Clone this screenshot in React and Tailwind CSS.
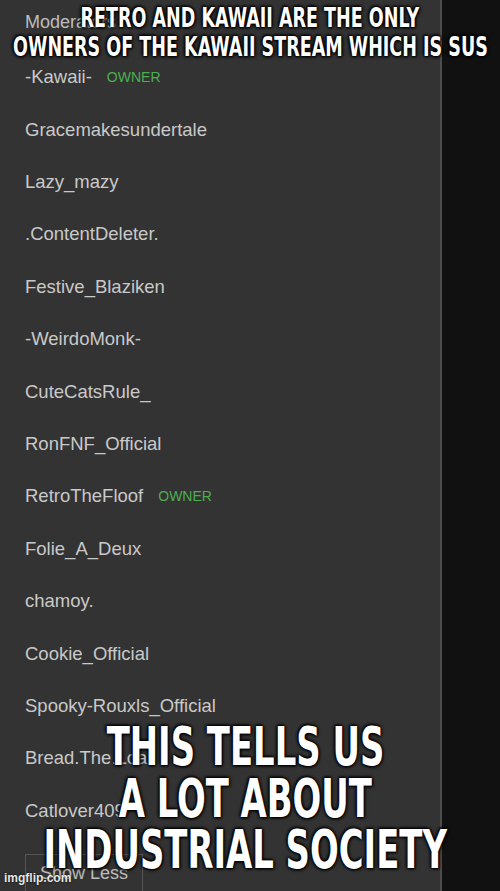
import React from "react";

const members = [
  { name: "-Kawaii-", owner: true },
  { name: "Gracemakesundertale" },
  { name: "Lazy_mazy" },
  { name: ".ContentDeleter." },
  { name: "Festive_Blaziken" },
  { name: "-WeirdoMonk-" },
  { name: "CuteCatsRule_" },
  { name: "RonFNF_Official" },
  { name: "RetroTheFloof", owner: true },
  { name: "Folie_A_Deux" },
  { name: "chamoy." },
  { name: "Cookie_Official" },
  { name: "Spooky-Rouxls_Official" },
  { name: "Bread.The.Loaf" },
  { name: "Catlover409" },
];

const memeFont =
  "font-['DejaVu_Sans_Condensed','Liberation_Sans',sans-serif] font-bold uppercase whitespace-nowrap text-white origin-center [text-shadow:0_0_3px_#000,0_0_3px_#000,1px_1px_4px_#000,-1px_-1px_4px_#000]";

const App = () => {
  return (
    <div className="relative w-[500px] h-[891px] overflow-hidden bg-[#111111] flex">
      {/* moderators panel */}
      <div className="w-[442px] h-full bg-[#333333] border-r-2 border-[#4d4d4d] pt-[10px] pl-[25px] font-['Liberation_Sans',Arial,sans-serif]">
        <div className="h-[24px] leading-[24px] text-[18px] text-[#bdbdbd]">Moderators</div>
        <div className="mt-[17px] flex flex-col">
          {members.map((m) => (
            <div key={m.name} className="h-[52.4px] flex items-center gap-[15px]">
              <span className="text-[18.5px] text-[#c9c9c9]">{m.name}</span>
              {m.owner && (
                <span className="text-[14px] text-[#4caf50]">OWNER</span>
              )}
            </div>
          ))}
        </div>
        <button className="mt-[17px] h-[40px] px-[14px] border border-[#555555] text-[18px] text-[#bdbdbd]">
          Show Less
        </button>
      </div>

      {/* meme captions */}
      <div className="absolute left-0 right-0 top-[4px] flex flex-col items-center text-[26px] leading-[29px]">
        <div className={`${memeFont} scale-x-[0.75]`}>Retro and Kawaii are the only</div>
        <div className={`${memeFont} scale-x-[0.75]`}>owners of the Kawaii stream which is sus</div>
      </div>
      <div className="absolute left-0 right-0 top-[721px] flex flex-col items-center text-[53px] leading-[51.5px]">
        <div className={`${memeFont} scale-x-[0.71] -translate-x-[5px]`}>This tells us</div>
        <div className={`${memeFont} scale-x-[0.71] -translate-x-[5px]`}>a lot about</div>
        <div className={`${memeFont} scale-x-[0.71] -translate-x-[5px]`}>industrial society</div>
      </div>

      <div className="absolute left-[4px] bottom-[4px] text-[12px] font-bold text-white/90 font-['Liberation_Sans',Arial,sans-serif] [text-shadow:0_0_2px_#000]">
        imgflip.com
      </div>
    </div>
  );
};

export default App;
